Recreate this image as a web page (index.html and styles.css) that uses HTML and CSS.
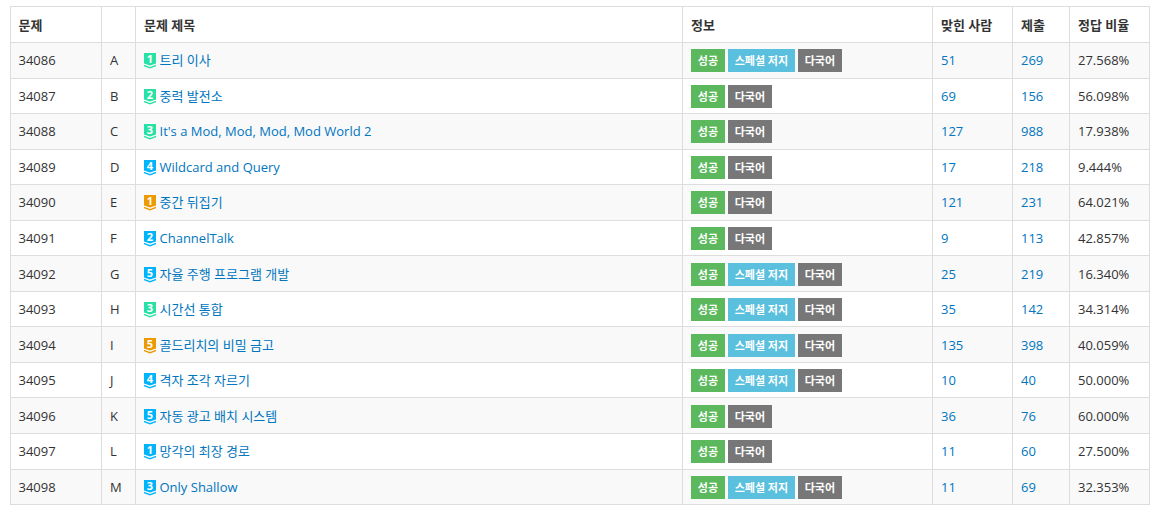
FILE: index.html
```html
<!DOCTYPE html>
<html lang="ko">
<head>
<meta charset="utf-8">
<title>문제 목록</title>
<link rel="stylesheet" href="styles.css">
</head>
<body>
<svg class="defs" width="0" height="0" aria-hidden="true"><defs><g id="sh"><path d="M0 0H12V10.4L6 12.6L0 10.4Z"/><path d="M0 11.8L6 14L12 11.8V13.2L6 15.4L0 13.2Z"/></g></defs></svg>
<table class="problems">
<colgroup><col class="c1"><col class="c2"><col class="c3"><col class="c4"><col class="c5"><col class="c6"><col class="c7"></colgroup>
<thead><tr><th>문제</th><th></th><th>문제 제목</th><th>정보</th><th>맞힌 사람</th><th>제출</th><th>정답 비율</th></tr></thead>
<tbody>
<tr><td>34086</td><td>A</td><td><span class="tier green"><svg viewBox="0 0 12 16"><use href="#sh"/></svg><b>1</b></span><a>트리 이사</a></td><td><span class="lb ok">성공</span><span class="lb sp">스페셜 저지</span><span class="lb ml">다국어</span></td><td><a>51</a></td><td><a>269</a></td><td>27.568%</td></tr>
<tr><td>34087</td><td>B</td><td><span class="tier green"><svg viewBox="0 0 12 16"><use href="#sh"/></svg><b>2</b></span><a>중력 발전소</a></td><td><span class="lb ok">성공</span><span class="lb ml">다국어</span></td><td><a>69</a></td><td><a>156</a></td><td>56.098%</td></tr>
<tr><td>34088</td><td>C</td><td><span class="tier green"><svg viewBox="0 0 12 16"><use href="#sh"/></svg><b>3</b></span><a>It's a Mod, Mod, Mod, Mod World 2</a></td><td><span class="lb ok">성공</span><span class="lb ml">다국어</span></td><td><a>127</a></td><td><a>988</a></td><td>17.938%</td></tr>
<tr><td>34089</td><td>D</td><td><span class="tier blue"><svg viewBox="0 0 12 16"><use href="#sh"/></svg><b>4</b></span><a>Wildcard and Query</a></td><td><span class="lb ok">성공</span><span class="lb ml">다국어</span></td><td><a>17</a></td><td><a>218</a></td><td>9.444%</td></tr>
<tr><td>34090</td><td>E</td><td><span class="tier orange"><svg viewBox="0 0 12 16"><use href="#sh"/></svg><b>1</b></span><a>중간 뒤집기</a></td><td><span class="lb ok">성공</span><span class="lb ml">다국어</span></td><td><a>121</a></td><td><a>231</a></td><td>64.021%</td></tr>
<tr><td>34091</td><td>F</td><td><span class="tier blue"><svg viewBox="0 0 12 16"><use href="#sh"/></svg><b>2</b></span><a>ChannelTalk</a></td><td><span class="lb ok">성공</span><span class="lb ml">다국어</span></td><td><a>9</a></td><td><a>113</a></td><td>42.857%</td></tr>
<tr><td>34092</td><td>G</td><td><span class="tier blue"><svg viewBox="0 0 12 16"><use href="#sh"/></svg><b>5</b></span><a>자율 주행 프로그램 개발</a></td><td><span class="lb ok">성공</span><span class="lb sp">스페셜 저지</span><span class="lb ml">다국어</span></td><td><a>25</a></td><td><a>219</a></td><td>16.340%</td></tr>
<tr><td>34093</td><td>H</td><td><span class="tier green"><svg viewBox="0 0 12 16"><use href="#sh"/></svg><b>3</b></span><a>시간선 통합</a></td><td><span class="lb ok">성공</span><span class="lb sp">스페셜 저지</span><span class="lb ml">다국어</span></td><td><a>35</a></td><td><a>142</a></td><td>34.314%</td></tr>
<tr><td>34094</td><td>I</td><td><span class="tier orange"><svg viewBox="0 0 12 16"><use href="#sh"/></svg><b>5</b></span><a>골드리치의 비밀 금고</a></td><td><span class="lb ok">성공</span><span class="lb sp">스페셜 저지</span><span class="lb ml">다국어</span></td><td><a>135</a></td><td><a>398</a></td><td>40.059%</td></tr>
<tr><td>34095</td><td>J</td><td><span class="tier blue"><svg viewBox="0 0 12 16"><use href="#sh"/></svg><b>4</b></span><a>격자 조각 자르기</a></td><td><span class="lb ok">성공</span><span class="lb sp">스페셜 저지</span><span class="lb ml">다국어</span></td><td><a>10</a></td><td><a>40</a></td><td>50.000%</td></tr>
<tr><td>34096</td><td>K</td><td><span class="tier blue"><svg viewBox="0 0 12 16"><use href="#sh"/></svg><b>5</b></span><a>자동 광고 배치 시스템</a></td><td><span class="lb ok">성공</span><span class="lb ml">다국어</span></td><td><a>36</a></td><td><a>76</a></td><td>60.000%</td></tr>
<tr><td>34097</td><td>L</td><td><span class="tier blue"><svg viewBox="0 0 12 16"><use href="#sh"/></svg><b>1</b></span><a>망각의 최장 경로</a></td><td><span class="lb ok">성공</span><span class="lb ml">다국어</span></td><td><a>11</a></td><td><a>60</a></td><td>27.500%</td></tr>
<tr><td>34098</td><td>M</td><td><span class="tier blue"><svg viewBox="0 0 12 16"><use href="#sh"/></svg><b>3</b></span><a>Only Shallow</a></td><td><span class="lb ok">성공</span><span class="lb sp">스페셜 저지</span><span class="lb ml">다국어</span></td><td><a>11</a></td><td><a>69</a></td><td>32.353%</td></tr>
</tbody>
</table>
</body>
</html>
```
FILE: styles.css
```css
* { box-sizing: border-box; }
html, body { margin: 0; background: #fff; }
body {
  padding: 6px 10px 0;
  font-family: "Open Sans", "Noto Sans CJK KR", sans-serif;
  font-size: 13px;
  line-height: 18px;
  color: #333;
}
.defs { position: absolute; }
.problems {
  width: 1139px;
  table-layout: fixed;
  border-collapse: collapse;
  border: 1px solid #ddd;
}
.c1 { width: 91px; }
.c2 { width: 34px; }
.c3 { width: 547px; }
.c4 { width: 250px; }
.c5 { width: 80px; }
.c6 { width: 57px; }
.c7 { width: 80px; }
th, td {
  border: 1px solid #ddd;
  padding: 0 8px;
  height: 35.55px;
  text-align: left;
  vertical-align: middle;
  white-space: nowrap;
}
th:first-child, td:first-child { padding-left: 7.5px; }
th { font-weight: 700; height: 36px; }
tbody tr:nth-child(odd) { background: #f9f9f9; }
a { color: #0076c0; }
.tier {
  display: inline-grid;
  width: 12px;
  height: 16px;
  margin: -3px 3.5px -3px 0;
  vertical-align: -4px;
}
.tier svg, .tier b { grid-area: 1 / 1; }
.tier svg { width: 12px; height: 16px; }
.tier b {
  color: #fff;
  font-size: 11px;
  font-weight: 700;
  line-height: 12px;
  text-align: center;
}
.green { fill: #27e2a4; }
.blue { fill: #00b4fc; }
.orange { fill: #ec9a00; }
.lb {
  display: inline-block;
  height: 23px;
  margin: -2px 3px -3px 0;
  padding: 0 6.8px;
  color: #fff;
  font-size: 11px;
  font-weight: 700;
  line-height: 23px;
  vertical-align: top;
}
.ok { background: #5cb85c; }
.sp { background: #5bc0de; }
.ml { background: #777; }
```
